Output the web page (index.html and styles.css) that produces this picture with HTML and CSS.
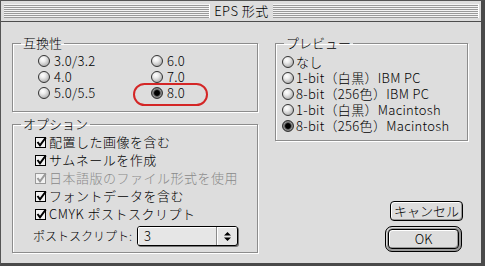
FILE: index.html
```html
<!DOCTYPE html>
<html lang="ja">
<head>
    <meta charset="UTF-8">
    <title>EPS 形式</title>
    <link rel="stylesheet" href="styles.css">
</head>
<body>
    <svg width="0" height="0" class="defs">
        <symbol id="chk" viewBox="0 0 13 13">
            <rect x="0.5" y="1.5" width="10" height="10" fill="#f2f2f2" stroke="currentColor"/>
            <path d="M2.5 6 L5 9.3 L10.8 1.5" fill="none" stroke="currentColor" stroke-width="2"/>
        </symbol>
    </svg>

    <div class="window">
        <div class="titlebar">
            <span class="stripes"></span>
            <span class="title">EPS 形式</span>
            <span class="stripes"></span>
        </div>

        <div class="content">
            <div class="col-left">
                <fieldset class="group">
                    <legend>互換性</legend>
                    <div class="compat">
                        <label class="item"><span class="radio"></span>3.0/3.2</label>
                        <label class="item"><span class="radio"></span>6.0</label>
                        <label class="item"><span class="radio"></span>4.0</label>
                        <label class="item"><span class="radio"></span>7.0</label>
                        <label class="item"><span class="radio"></span>5.0/5.5</label>
                        <label class="item marked"><span class="radio on"></span>8.0</label>
                    </div>
                </fieldset>

                <fieldset class="group">
                    <legend>オプション</legend>
                    <div class="options">
                        <label class="check-item"><svg class="check"><use href="#chk"/></svg>配置した画像を含む</label>
                        <label class="check-item"><svg class="check"><use href="#chk"/></svg>サムネールを作成</label>
                        <label class="check-item disabled"><svg class="check"><use href="#chk"/></svg>日本語版のファイル形式を使用</label>
                        <label class="check-item"><svg class="check"><use href="#chk"/></svg>フォントデータを含む</label>
                        <label class="check-item"><svg class="check"><use href="#chk"/></svg>CMYK ポストスクリプト</label>
                        <div class="popup-row">
                            <span class="popup-label">ポストスクリプト:</span>
                            <div class="popup">
                                <span class="popup-value">3</span>
                                <span class="popup-arrows">
                                    <svg width="7" height="9" viewBox="0 0 7 9"><path d="M3.5 0 L7 3.5 L0 3.5 Z M0 5.5 L7 5.5 L3.5 9 Z" fill="#000"/></svg>
                                </span>
                            </div>
                        </div>
                    </div>
                </fieldset>
            </div>

            <div class="col-right">
                <fieldset class="group">
                    <legend>プレビュー</legend>
                    <div class="preview">
                        <label class="item"><span class="radio"></span>なし</label>
                        <label class="item"><span class="radio"></span>1-bit（白黒）IBM PC</label>
                        <label class="item"><span class="radio"></span>8-bit（256色）IBM PC</label>
                        <label class="item"><span class="radio"></span>1-bit（白黒）Macintosh</label>
                        <label class="item"><span class="radio on"></span>8-bit（256色）Macintosh</label>
                    </div>
                </fieldset>

                <div class="buttons">
                    <button class="btn cancel">キャンセル</button>
                    <div class="default-ring">
                        <button class="btn ok">OK</button>
                    </div>
                </div>
            </div>
        </div>
    </div>
</body>
</html>
```

FILE: styles.css
```css
body {
    margin: 0;
    padding: 0;
    background: #222;
    font-family: "Noto Sans CJK JP", sans-serif;
    font-weight: 300;
    font-size: 13px;
    line-height: 16px;
    color: #000;
}

.defs {
    position: absolute;
}

.window {
    width: 485px;
    height: 266px;
    box-sizing: border-box;
    background: #dddddd;
    border-top: 1px solid #555;
    border-left: 1px solid #555;
    border-right: 4px solid #4a4a4a;
    border-bottom: 3px solid #4a4a4a;
    display: flex;
    flex-direction: column;
    overflow: hidden;
}

.titlebar {
    height: 20px;
    flex: none;
    display: flex;
    align-items: center;
    gap: 4px;
    padding: 0 2px 0 3px;
    border-bottom: 1px solid #4d4d4d;
}

.stripes {
    flex: 1;
    height: 14px;
    background: repeating-linear-gradient(to bottom, #f4f4f4 0 1px, #9a9a9a 1px 2px);
    border-right: 1px solid #fff;
}

.title {
    line-height: 20px;
    letter-spacing: 0.5px;
}

.content {
    flex: 1;
    display: flex;
    gap: 17px;
    padding: 13px 0 8px 11px;
    min-height: 0;
}

.col-left {
    width: 246px;
    display: flex;
    flex-direction: column;
    gap: 4px;
}

.col-right {
    width: 193px;
    display: flex;
    flex-direction: column;
}

.group {
    margin: 0;
    padding: 0;
    border: 1px solid #8c8c8c;
    box-shadow: 1px 1px 0 #fff, inset 1px 1px 0 #fff;
    min-width: 0;
}

.group legend {
    margin-left: 8px;
    padding: 0 2px;
    line-height: 16px;
}

.compat {
    display: grid;
    grid-template-columns: 113px 1fr;
    grid-auto-rows: 16px;
    padding: 2px 0 10px 25px;
}

.item {
    display: flex;
    align-items: center;
    gap: 4px;
    white-space: nowrap;
    letter-spacing: 0.3px;
}

.marked {
    position: relative;
    justify-self: start;
}

.marked::after {
    content: "";
    position: absolute;
    left: -18px;
    top: -2px;
    width: 75px;
    height: 23px;
    box-sizing: border-box;
    border: 2.5px solid #d42626;
    border-radius: 12px;
}

.radio {
    width: 12px;
    height: 12px;
    flex: none;
    box-sizing: border-box;
    border-radius: 50%;
    border: 1px solid #333;
    background: radial-gradient(circle at 38% 32%, #fff 0, #ececec 30%, #b4b4b4 75%, #8a8a8a 100%);
}

.radio.on {
    background: radial-gradient(circle, #000 0 2.4px, #4a4a4a 3.2px, #9a9a9a 4.2px, #666 5px);
}

.options {
    padding: 1px 0 6px 22px;
}

.check-item {
    height: 18px;
    display: flex;
    align-items: center;
    gap: 1px;
    white-space: nowrap;
    letter-spacing: 0.5px;
}

.check {
    width: 13px;
    height: 13px;
    flex: none;
    color: #000;
}

.disabled {
    color: #8a8a8a;
}

.disabled .check {
    color: #9a9a9a;
}

.popup-row {
    display: flex;
    align-items: center;
    gap: 4px;
    margin: 3px 0 0 -2px;
}

.popup-label {
    width: 100px;
    font-size: 12px;
    white-space: nowrap;
}

.popup {
    width: 101px;
    height: 20px;
    box-sizing: border-box;
    border: 1px solid #000;
    border-radius: 3px;
    background: #e6e6e6;
    box-shadow: 1px 1px 0 #777;
    display: flex;
    overflow: hidden;
}

.popup-value {
    flex: 1;
    padding-left: 6px;
    line-height: 18px;
    box-shadow: inset 1px 1px 0 #fff;
}

.popup-arrows {
    width: 20px;
    border-left: 1px solid #8a8a8a;
    box-shadow: inset 1px 1px 0 #fff;
    display: flex;
    align-items: center;
    justify-content: center;
}

.preview {
    display: flex;
    flex-direction: column;
    padding: 3px 0 6px 6px;
}

.preview .item {
    height: 16px;
    gap: 2px;
}

.buttons {
    margin-top: auto;
    margin-bottom: 3px;
    margin-right: 5px;
    display: flex;
    flex-direction: column;
    align-items: flex-end;
    gap: 5px;
}

.btn {
    font: inherit;
    color: #000;
    padding: 0;
    height: 20px;
    border: 1px solid #000;
    border-radius: 4px;
    background: #dddddd;
    box-shadow: inset 1px 1px 0 #fff, inset -1px -1px 0 #999;
}

.cancel {
    width: 73px;
}

.default-ring {
    border: 1px solid #000;
    border-radius: 7px;
    padding: 2px;
    background: #9a9a9a;
    box-shadow: inset 1px 1px 0 #ddd;
    margin-right: 1px;
}

.ok {
    width: 71px;
    height: 20px;
    display: block;
}
```
